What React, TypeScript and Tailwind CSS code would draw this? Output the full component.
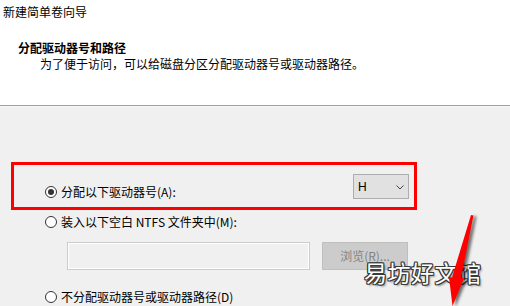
import React from "react";

function Radio({ checked }: { checked?: boolean }) {
  return (
    <span className="w-[12px] h-[12px] rounded-full border border-[#333333] bg-white flex items-center justify-center shrink-0">
      {checked && <span className="w-[6px] h-[6px] rounded-full bg-[#333333]" />}
    </span>
  );
}

export default function App() {
  return (
    <div className="relative w-[510px] h-[306px] overflow-hidden bg-[#f0f0f0] text-[12px] text-black font-['Noto_Sans_CJK_SC','Noto_Sans',sans-serif]">
      <div className="h-[106px] bg-white border-b border-[#a0a0a0] pt-[4px] box-border">
        <div className="pl-[3px] leading-[16px]">新建简单卷向导</div>
        <div className="pl-[18px] mt-[20px] leading-[16px] font-bold">分配驱动器号和路径</div>
        <div className="pl-[40px] leading-[16px]">为了便于访问，可以给磁盘分区分配驱动器号或驱动器路径。</div>
      </div>
      <div className="border-t border-[#f7f7f7]" />

      <div className="flex mt-[67px] h-[24px]">
        <div className="w-[353px] shrink-0 flex items-center pl-[45px] mt-[9px] h-[17px]">
          <Radio checked />
          <span className="ml-[4px] leading-[17px]">分配以下驱动器号(A):</span>
        </div>
        <div className="w-[56px] h-[25px] bg-[#e1e1e1] border border-[#adadad] flex items-center justify-between pl-[4px] pr-[4px] box-border">
          <span className="leading-none text-[12px] font-['Liberation_Sans',sans-serif]">H</span>
          <svg width="8" height="5" viewBox="0 0 8 5" className="mt-[1px]">
            <path d="M0.5 0.5 L4 4 L7.5 0.5" fill="none" stroke="#444" strokeWidth="1" />
          </svg>
        </div>
      </div>

      <div className="flex items-center pl-[45px] mt-[15px] h-[17px]">
        <Radio />
        <span className="ml-[4px] leading-[17px]">装入以下空白 NTFS 文件夹中(M):</span>
      </div>

      <div className="flex pl-[67px] mt-[12px]">
        <div className="w-[243px] h-[28px] border border-[#cccccc] box-border">
          <div className="w-full h-full border border-white box-border" />
        </div>
        <div className="ml-[12px] w-[86px] h-[28px] bg-[#cccccc] border border-[#bfbfbf] box-border flex items-center justify-center text-[#838383] leading-none">
          浏览(R)...
        </div>
      </div>

      <div className="flex items-center pl-[45px] mt-[18px] h-[17px]">
        <Radio />
        <span className="ml-[4px] leading-[17px]">不分配驱动器号或驱动器路径(D)</span>
      </div>

      {/* red annotation box */}
      <div className="absolute left-[11px] top-[162px] w-[406px] h-[48px] border-[3px] border-[#ff0000] box-border pointer-events-none" />

      {/* watermark */}
      <div
        className="absolute left-[364px] top-[260px] text-[23px] leading-[24px] text-white tracking-[0.5px] font-['Noto_Sans_CJK_SC',sans-serif]"
        style={{
          textShadow:
            "1px 0 0 #3a3a3a, -1px 0 0 #3a3a3a, 0 1px 0 #3a3a3a, 0 -1px 0 #3a3a3a, 1px 1px 0 #3a3a3a, -1px -1px 0 #3a3a3a, 1px -1px 0 #3a3a3a, -1px 1px 0 #3a3a3a, 2px 2px 2px rgba(0,0,0,0.4)",
        }}
      >
        易坊好文馆
      </div>

      {/* red arrow */}
      <svg className="absolute left-[440px] top-[205px]" width="50" height="101" viewBox="0 0 50 101">
        <defs>
          <filter id="sh" x="-50%" y="-50%" width="200%" height="200%">
            <feGaussianBlur stdDeviation="1.8" />
          </filter>
        </defs>
        <g transform="translate(3,1)" filter="url(#sh)" opacity="0.55">
          <path d="M31 10 L33.5 10.5 L21 73 L24 73 L12.5 101 L9 72 L12 72.5 Z" fill="#000" />
        </g>
        <path d="M31 10 L33.5 10.5 L21 73 L24 73 L12.5 101 L9 72 L12 72.5 Z" fill="#ff0000" />
      </svg>
    </div>
  );
}
